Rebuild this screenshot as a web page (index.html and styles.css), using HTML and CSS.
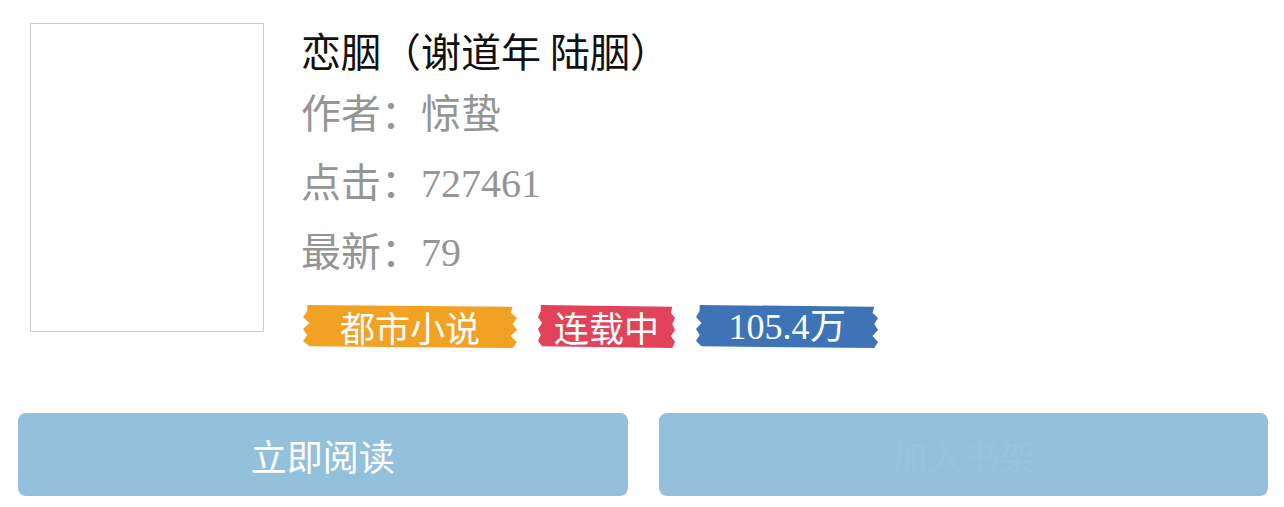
FILE: index.html
```html
<!DOCTYPE html>
<html lang="zh-CN">
<head>
  <meta charset="UTF-8" />
  <meta name="viewport" content="width=device-width, initial-scale=1.0" />
  <title>恋胭（谢道年 陆胭）</title>
  <link rel="stylesheet" href="styles.css">
</head>
<body>

  <div class="book">
    <div class="cover"></div>
    <div class="info">
      <h1 class="title">恋胭（谢道年 陆胭）</h1>
      <p class="meta">作者：<span>惊蛰</span></p>
      <p class="meta">点击：<span class="num">727461</span></p>
      <p class="meta">最新：<span class="num">79</span></p>
      <div class="tags">
        <span class="tag tag-type">都市小说</span>
        <span class="tag tag-status">连载中</span>
        <span class="tag tag-count num">105.4万</span>
      </div>
    </div>
  </div>

  <div class="actions">
    <a href="#" class="btn">立即阅读</a>
    <a href="#" class="btn btn-muted">加入书架</a>
  </div>

</body>
</html>
```

FILE: styles.css
```css
body {
  font-family: "Noto Sans CJK SC", "Noto Sans", sans-serif;
  margin: 0;
  background: #fff;
}
.book {
  display: flex;
  align-items: flex-start;
  gap: 37px;
  padding: 23px 0 0 30px;
}
.cover {
  width: 232px;
  height: 307px;
  border: 1px solid #cdcdcd;
  background: #fff;
  flex-shrink: 0;
}
.info {
  display: flex;
  flex-direction: column;
}
.title {
  margin: 0;
  font-size: 40px;
  font-weight: normal;
  line-height: 54px;
  color: #111;
  white-space: nowrap;
}
.meta {
  margin: 0;
  font-size: 40px;
  line-height: 69px;
  color: #959595;
}
.num {
  font-family: "Liberation Serif", serif;
  line-height: 1;
}
.tags {
  display: flex;
  gap: 21px;
  margin-top: 21px;
  margin-left: 2px;
}
.tag {
  display: flex;
  align-items: center;
  justify-content: center;
  height: 43px;
  color: #fff;
  font-size: 35px;
  line-height: 1;
  /* brush-stroke edges */
  clip-path: polygon(2% 0, 98% 4%, 97% 18%, 100% 30%, 98% 44%, 100% 58%, 97% 72%, 100% 86%, 98% 100%, 3% 96%, 0 84%, 2% 70%, 0 56%, 3% 42%, 0 28%, 2% 14%);
}
.tag-type {
  width: 214px;
  background: #f2a223;
}
.tag-status {
  width: 137px;
  background: #e3435a;
}
.tag-count {
  width: 182px;
  background: #3e74b7;
  font-size: 36px;
}
.actions {
  display: flex;
  gap: 31px;
  margin-top: 65px;
  padding: 0 16px 0 18px;
}
.btn {
  flex: 1;
  height: 83px;
  display: flex;
  align-items: center;
  justify-content: center;
  background: #93c1dc;
  border-radius: 8px;
  color: #fff;
  font-size: 36px;
  text-decoration: none;
}
.btn-muted {
  color: #97c4dd;
}
```
